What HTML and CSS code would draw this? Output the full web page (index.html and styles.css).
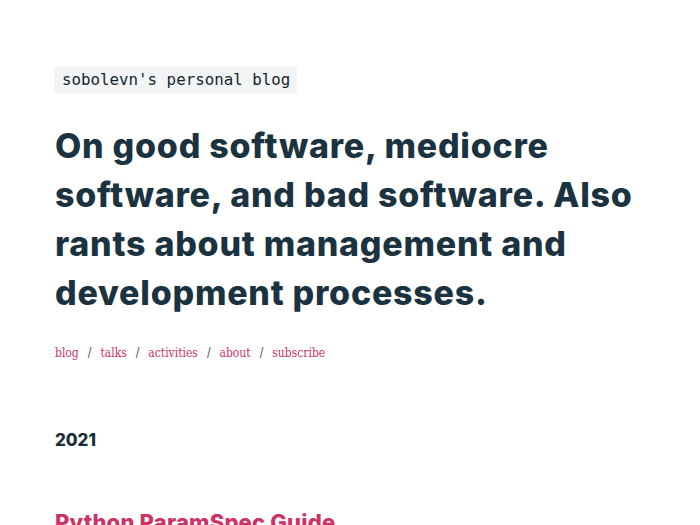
FILE: index.html
```html
<!DOCTYPE html>
<html lang="en">
<head>
<meta charset="utf-8">
<title>sobolevn's personal blog</title>
<link rel="stylesheet" href="styles.css">
</head>
<body>
<main class="page">
  <header class="header">
    <div class="brand"><code class="brand-code">sobolevn's personal blog</code></div>
    <h1 class="title">On good software, mediocre software, and bad software. Also rants about management and development processes.</h1>
    <nav class="nav">
      <a class="nav-link" href="#">blog</a><span class="sep">/</span><a class="nav-link" href="#">talks</a><span class="sep">/</span><a class="nav-link" href="#">activities</a><span class="sep">/</span><a class="nav-link" href="#">about</a><span class="sep">/</span><a class="nav-link" href="#">subscribe</a>
    </nav>
  </header>
  <section class="year">
    <h2 class="year-title">2021</h2>
    <h3 class="post-title"><a href="#">Python ParamSpec Guide</a></h3>
  </section>
</main>
</body>
</html>
```

FILE: styles.css
```css
html, body {
  margin: 0;
  padding: 0;
  background: #ffffff;
}
.page {
  padding: 67px 55px 0 55px;
}
.brand {
  display: flex;
}
.brand-code {
  background: #f3f4f5;
  color: #15262d;
  font-family: "DejaVu Sans Mono", "Liberation Mono", monospace;
  font-size: 15.8px;
  line-height: 26px;
  padding: 0 7px 0 8px;
  margin-left: -1px;
  border-radius: 2px;
}
.title {
  margin: 28px 0 0 0;
  font-family: "Inter", "DejaVu Sans", sans-serif;
  font-weight: 800;
  font-size: 34px;
  line-height: 49px;
  color: #1b3340;
  letter-spacing: 0.75px;
}
.nav {
  display: flex;
  margin-top: 26px;
  font-family: "DejaVu Serif Condensed", "DejaVu Serif", serif;
  font-size: 12px;
  line-height: 20px;
  color: #333;
}
.nav-link {
  color: #c8336a;
  text-decoration: none;
}
.sep {
  padding: 0 9px;
  color: #444;
}
.year-title {
  margin: 65px 0 0 0;
  font-family: "Inter", "DejaVu Sans", sans-serif;
  font-weight: 800;
  font-size: 17px;
  line-height: 24px;
  color: #1b2e35;
}
.post-title {
  margin: 56px 0 0 0;
  font-family: "Inter", "DejaVu Sans", sans-serif;
  font-weight: 800;
  font-size: 22px;
  line-height: 28px;
  letter-spacing: 0.2px;
}
.post-title a {
  color: #cc3366;
  text-decoration: none;
}
```
